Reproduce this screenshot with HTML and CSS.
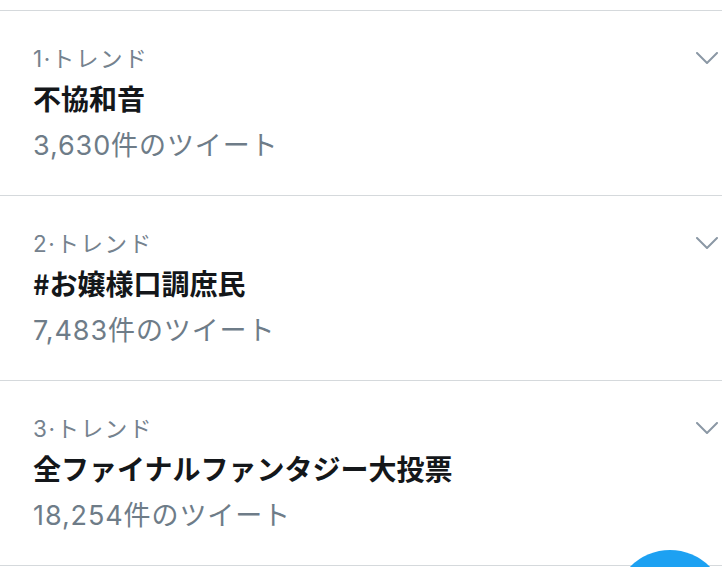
FILE: index.html
```html
<!DOCTYPE html>
<html lang="ja">
<head>
<meta charset="utf-8">
<link rel="stylesheet" href="styles.css">
</head>
<body>
<div class="list">
  <div class="trend">
    <div class="info">
      <div class="label">1·トレンド</div>
      <div class="title">不協和音</div>
      <div class="count">3,630件のツイート</div>
    </div>
    <svg class="chev" viewBox="0 0 22 12"><path d="M1 1 L11 11 L21 1" fill="none" stroke="#8b98a5" stroke-width="2" stroke-linecap="round" stroke-linejoin="round"/></svg>
  </div>
  <div class="trend">
    <div class="info">
      <div class="label">2·トレンド</div>
      <div class="title">#お嬢様口調庶民</div>
      <div class="count">7,483件のツイート</div>
    </div>
    <svg class="chev" viewBox="0 0 22 12"><path d="M1 1 L11 11 L21 1" fill="none" stroke="#8b98a5" stroke-width="2" stroke-linecap="round" stroke-linejoin="round"/></svg>
  </div>
  <div class="trend">
    <div class="info">
      <div class="label">3·トレンド</div>
      <div class="title">全ファイナルファンタジー大投票</div>
      <div class="count">18,254件のツイート</div>
    </div>
    <svg class="chev" viewBox="0 0 22 12"><path d="M1 1 L11 11 L21 1" fill="none" stroke="#8b98a5" stroke-width="2" stroke-linecap="round" stroke-linejoin="round"/></svg>
  </div>
</div>
<div class="fab"></div>
</body>
</html>
```
FILE: styles.css
```css
html, body {
  margin: 0;
  padding: 0;
  background: #ffffff;
  overflow: hidden;
  height: 567px;
}
body {
  font-family: "Noto Sans CJK JP", "Noto Sans", sans-serif;
  position: relative;
}
.list {
  padding-top: 10px;
}
.trend {
  display: flex;
  justify-content: space-between;
  align-items: flex-start;
  height: 184px;
  border-top: 1px solid #d5d9dc;
  padding-left: 33px;
  padding-right: 4px;
}
.trend:last-child {
  border-bottom: 1px solid #d5d9dc;
}
.info {
  display: flex;
  flex-direction: column;
  padding-top: 33px;
}
.label {
  font-family: "Inter", "Noto Sans CJK JP", sans-serif;
  font-size: 22.5px;
  line-height: 30px;
  color: #75828e;
  letter-spacing: 1.6px;
}
.title {
  font-size: 28px;
  line-height: 40px;
  font-weight: 700;
  color: #14171a;
  margin-top: 4px;
}
.count {
  font-family: "Inter", "Noto Sans CJK JP", sans-serif;
  font-size: 27px;
  line-height: 40px;
  color: #6e7c88;
  margin-top: 8px;
  letter-spacing: 0.9px;
}
.chev {
  width: 22px;
  height: 12px;
  margin-top: 41px;
}
.fab {
  position: absolute;
  left: 614px;
  top: 550px;
  width: 112px;
  height: 112px;
  border-radius: 50%;
  background: #1da1f2;
}
```
